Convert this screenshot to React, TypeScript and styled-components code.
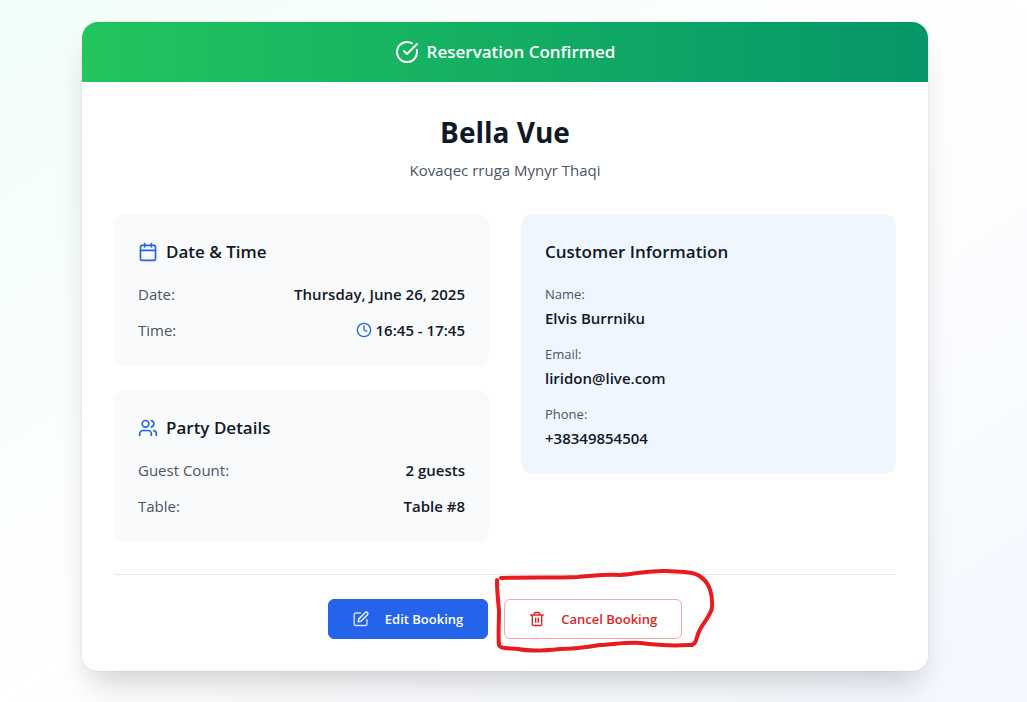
import React from "react";
import styled, { createGlobalStyle } from "styled-components";
import { Calendar, CircleCheckBig, Clock, Users } from "lucide-react";

const GlobalStyle = createGlobalStyle`
  *, *::before, *::after { box-sizing: border-box; }
  body {
    margin: 0;
    font-family: "Segoe UI", "Open Sans", "Noto Sans", sans-serif;
    font-size: 15px;
    line-height: 24px;
    color: #111827;
  }
  h1, h2, h3, p, dl, dd { margin: 0; }
`;

const Page = styled.main`
  min-height: 100vh;
  padding: 22px 99px 30px 82px;
  background: linear-gradient(to bottom right, #f1fef8, #ffffff 50%, #f3f8ff);
`;

const Card = styled.article`
  max-width: 896px;
  margin: 0 auto;
  background: #ffffff;
  border-radius: 16px;
  box-shadow: 0 0 0 1px rgba(0, 0, 0, 0.03), 0 20px 32px -8px rgba(0, 0, 0, 0.18);
`;

const Banner = styled.header`
  display: flex;
  align-items: center;
  justify-content: center;
  gap: 8px;
  padding: 16px 24px;
  color: #ffffff;
  border-radius: 16px 16px 0 0;
  background: linear-gradient(to right, #22c55e, #059669);
`;

const BannerText = styled.h2`
  font-size: 17px;
  line-height: 28px;
  font-weight: 600;
`;

const Body = styled.div`
  padding: 32px;
`;

const Venue = styled.div`
  text-align: center;
  margin-bottom: 32px;
`;

const VenueName = styled.h1`
  font-size: 28px;
  line-height: 36px;
  font-weight: 700;
  margin-bottom: 8px;
`;

const VenueAddress = styled.p`
  color: #4b5563;
`;

const Columns = styled.div`
  display: grid;
  grid-template-columns: 1fr 1fr;
  align-items: start;
  gap: 32px;
`;

const Stack = styled.div`
  display: grid;
  gap: 24px;
`;

const Panel = styled.section<{ $tone?: "blue" }>`
  padding: 24px;
  border-radius: 12px;
  background: ${(p) => (p.$tone === "blue" ? "#eff6ff" : "#f9fafb")};
`;

const PanelTitle = styled.h3`
  display: flex;
  align-items: center;
  gap: 8px;
  margin-bottom: 16px;
  font-size: 17px;
  line-height: 28px;
  font-weight: 600;

  svg { color: #2563eb; }
`;

const List = styled.dl`
  display: grid;
  gap: 12px;
`;

const Row = styled.div`
  display: flex;
  align-items: center;
  justify-content: space-between;
`;

const Label = styled.dt<{ $small?: boolean }>`
  color: #4b5563;
  font-size: ${(p) => (p.$small ? 13 : 15)}px;
`;

const Value = styled.dd`
  display: flex;
  align-items: center;
  gap: 4px;
  font-weight: 600;

  svg { color: #2563eb; }
`;

const Actions = styled.footer`
  display: flex;
  justify-content: center;
  gap: 16px;
  margin-top: 32px;
  padding-top: 24px;
  border-top: 1px solid #e5e7eb;
`;

const Button = styled.button<{ $danger?: boolean }>`
  display: flex;
  align-items: center;
  gap: 16px;
  height: 40px;
  padding: 0 24px;
  border: 1px solid ${(p) => (p.$danger ? "#fca5a5" : "#2563eb")};
  border-radius: 6px;
  background: ${(p) => (p.$danger ? "#ffffff" : "#2563eb")};
  color: ${(p) => (p.$danger ? "#dc2626" : "#ffffff")};
  font: inherit;
  font-size: 13px;
  font-weight: 600;
  cursor: pointer;
`;

const CancelArea = styled.div`
  position: relative;
`;

const Scribble = styled.svg`
  position: absolute;
  left: -10px;
  top: -31px;
  pointer-events: none;
`;

const EditIcon = () => (
  <svg width="16" height="16" viewBox="0 0 16 16" fill="none" stroke="currentColor" strokeLinecap="round" strokeLinejoin="round" aria-hidden="true">
    <path d="M7.5 2H2.700A1.500 1.500 0 0 0 1.200 3.500v9.500a1.500 1.500 0 0 0 1.500 1.500h9.800a1.500 1.500 0 0 0 1.500-1.500V8.500" strokeWidth="1.400" opacity="0.8" />
    <path d="M12.300 1.500a1.500 1.500 0 0 1 2.200 2.200L8 10.200l-2.900.7.7-2.900z" strokeWidth="1.300" />
  </svg>
);

const TrashIcon = () => (
  <svg width="16" height="16" viewBox="0 0 16 16" fill="none" stroke="currentColor" strokeWidth="1.400" strokeLinecap="round" strokeLinejoin="round" aria-hidden="true">
    <path d="M1.700 4h12.600M3.300 4v9.200a1.300 1.300 0 0 0 1.300 1.300h6.800a1.300 1.300 0 0 0 1.300-1.300V4M5.300 4V2.700a1.200 1.200 0 0 1 1.200-1.200h3a1.200 1.200 0 0 1 1.200 1.200V4M6.700 7.300v4M9.300 7.300v4" />
  </svg>
);

const details = [
  ["Name:", "Elvis Burrniku"],
  ["Email:", "liridon@live.com"],
  ["Phone:", "+38349854504"],
];

export default function App() {
  return (
    <>
      <GlobalStyle />
      <Page>
        <Card>
          <Banner>
            <CircleCheckBig size={24} />
            <BannerText>Reservation Confirmed</BannerText>
          </Banner>
          <Body>
            <Venue>
              <VenueName>Bella Vue</VenueName>
              <VenueAddress>Kovaqec rruga Mynyr Thaqi</VenueAddress>
            </Venue>
            <Columns>
              <Stack>
                <Panel>
                  <PanelTitle><Calendar size={20} />Date &amp; Time</PanelTitle>
                  <List>
                    <Row><Label>Date:</Label><Value>Thursday, June 26, 2025</Value></Row>
                    <Row><Label>Time:</Label><Value><Clock size={16} />16:45 - 17:45</Value></Row>
                  </List>
                </Panel>
                <Panel>
                  <PanelTitle><Users size={20} />Party Details</PanelTitle>
                  <List>
                    <Row><Label>Guest Count:</Label><Value>2 guests</Value></Row>
                    <Row><Label>Table:</Label><Value>Table #8</Value></Row>
                  </List>
                </Panel>
              </Stack>
              <Panel $tone="blue">
                <PanelTitle>Customer Information</PanelTitle>
                <List>
                  {details.map(([label, value]) => (
                    <div key={label}>
                      <Label $small>{label}</Label>
                      <Value>{value}</Value>
                    </div>
                  ))}
                </List>
              </Panel>
            </Columns>
            <Actions>
              <Button type="button"><EditIcon />Edit Booking</Button>
              <CancelArea>
                <Button type="button" $danger><TrashIcon />Cancel Booking</Button>
                <Scribble width="222" height="86" viewBox="0 0 222 86" fill="none" stroke="#e81c1f" strokeWidth="4" strokeLinecap="round" strokeLinejoin="round" aria-hidden="true">
                  <path d="M3 12C3 24 4 32 5 42C5 56 4 68 5 77C6 81 16 80 24 81C34 83 48 83 66 81C82 81 94 79 106 77C122 76 134 74 146 75C162 77 178 78 194 77C202 78 202 72 204 66C207 57 216 49 218 40C219 26 215 15 208 10C201 3 188 4 173 3C156 2 144 6 126 7C110 6 98 8 84 9C60 10 32 9 7 10" />
                </Scribble>
              </CancelArea>
            </Actions>
          </Body>
        </Card>
      </Page>
    </>
  );
}
